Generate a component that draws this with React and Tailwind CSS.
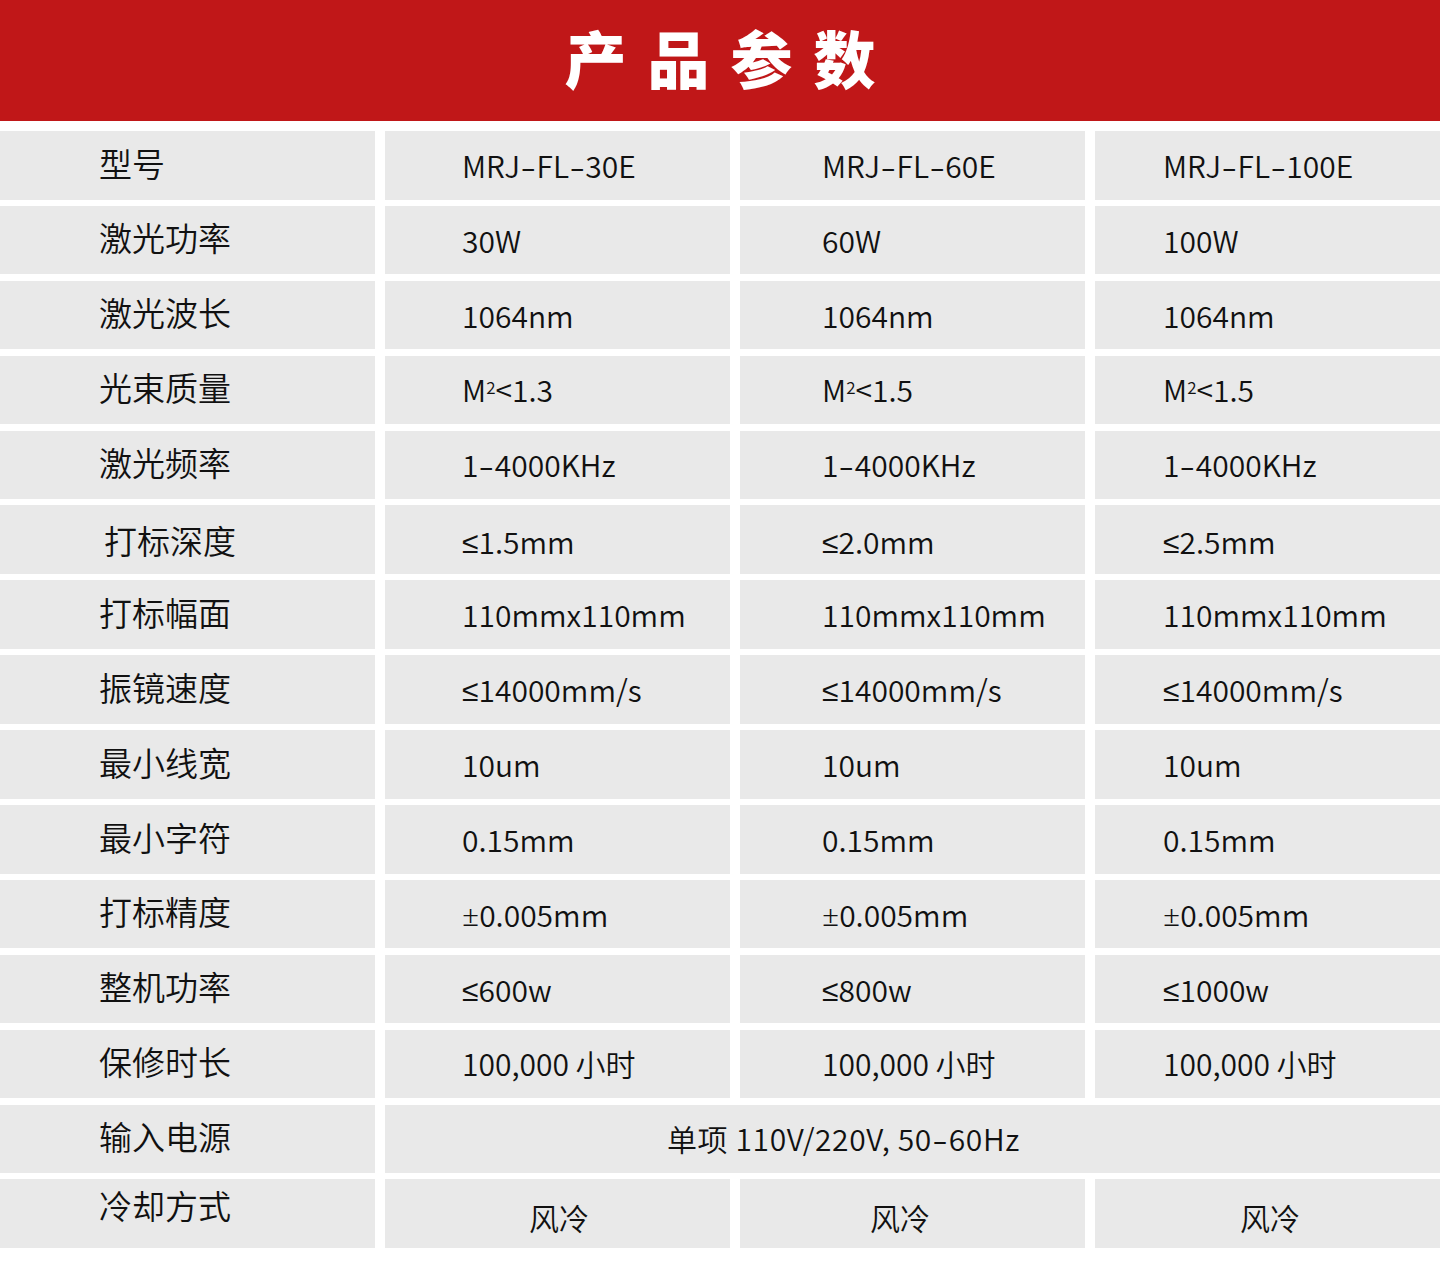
import React from "react";

const FONT = { fontFamily: '"Noto Sans CJK SC", "Noto Sans", sans-serif' };

// widen hyphens and pull ≤ / ± from a Latin face, like the original artwork
function fmt(text) {
  if (typeof text !== "string") return text;
  return text.split(/([-≤±])/).map((part, i) => {
    if (part === "-") return <span key={i} className="inline-block scale-x-[1.5] mx-[3px]">-</span>;
    if (part === "≤" || part === "±")
      return <span key={i} className="font-['Noto_Sans',sans-serif]">{part}</span>;
    return part;
  });
}

const M2 = ({ v }) => (
  <>
    M<sup className="text-[17px] relative -top-[3px] align-super leading-none">2</sup>&lt;{v}
  </>
);

const rows = [
  { label: "型号", values: ["MRJ-FL-30E", "MRJ-FL-60E", "MRJ-FL-100E"] },
  { label: "激光功率", values: ["30W", "60W", "100W"] },
  { label: "激光波长", values: ["1064nm", "1064nm", "1064nm"] },
  { label: "光束质量", values: [<M2 v="1.3" />, <M2 v="1.5" />, <M2 v="1.5" />] },
  { label: "激光频率", values: ["1-4000KHz", "1-4000KHz", "1-4000KHz"] },
  { label: "打标深度", values: ["≤1.5mm", "≤2.0mm", "≤2.5mm"], shift: true },
  { label: "打标幅面", values: ["110mmx110mm", "110mmx110mm", "110mmx110mm"] },
  { label: "振镜速度", values: ["≤14000mm/s", "≤14000mm/s", "≤14000mm/s"] },
  { label: "最小线宽", values: ["10um", "10um", "10um"] },
  { label: "最小字符", values: ["0.15mm", "0.15mm", "0.15mm"] },
  { label: "打标精度", values: ["±0.005mm", "±0.005mm", "±0.005mm"] },
  { label: "整机功率", values: ["≤600w", "≤800w", "≤1000w"] },
  { label: "保修时长", values: ["100,000 小时", "100,000 小时", "100,000 小时"] },
];

const cell = "bg-[#e9e9e9] h-[68.5px] flex items-center text-[30px] font-[350] text-[#111] whitespace-nowrap";
const labelCell = "bg-[#e9e9e9] h-[68.5px] flex items-center text-[33px] font-[350] text-[#111] whitespace-nowrap";
const valuePad = ["pl-[77px]", "pl-[82px]", "pl-[68px]"];

export default function App() {
  return (
    <div className="w-[1440px] h-[1264px] bg-white" style={FONT}>
      <header className="h-[121px] bg-[#c01718] flex items-center justify-center">
        <h1 className="text-[62px] font-black text-white tracking-[21px] pl-[21px] leading-none -mt-[8px]">
          产品参数
        </h1>
      </header>

      <div className="mt-[10px] flex flex-col gap-y-[6.4px]">
        {rows.map((r) => (
          <div key={r.label} className="grid grid-cols-[375px_345px_345px_345px] gap-x-[10px]">
            <div className={`${labelCell} ${r.shift ? "pl-[104px] pt-[2px]" : "pl-[99px] pb-[4px]"}`}>{r.label}</div>
            {r.values.map((v, i) => (
              <div key={i} className={`${cell} ${valuePad[i]} ${r.shift ? "pt-[4px]" : ""}`}>
                {fmt(v)}
              </div>
            ))}
          </div>
        ))}

        <div className="grid grid-cols-[375px_1055px] gap-x-[10px]">
          <div className={`${labelCell} pl-[99px] pb-[4px]`}>输入电源</div>
          <div className={`${cell} pl-[282px] tracking-[0.6px]`}>{fmt("单项 110V/220V, 50-60Hz")}</div>
        </div>

        <div className="grid grid-cols-[375px_345px_345px_345px] gap-x-[10px]">
          <div className={`${labelCell} pl-[99px] pb-[16px]`}>冷却方式</div>
          <div className={`${cell} pl-[144px] pt-[8px]`}>风冷</div>
          <div className={`${cell} pl-[130px] pt-[8px]`}>风冷</div>
          <div className={`${cell} pl-[145px] pt-[8px]`}>风冷</div>
        </div>
      </div>
    </div>
  );
}
